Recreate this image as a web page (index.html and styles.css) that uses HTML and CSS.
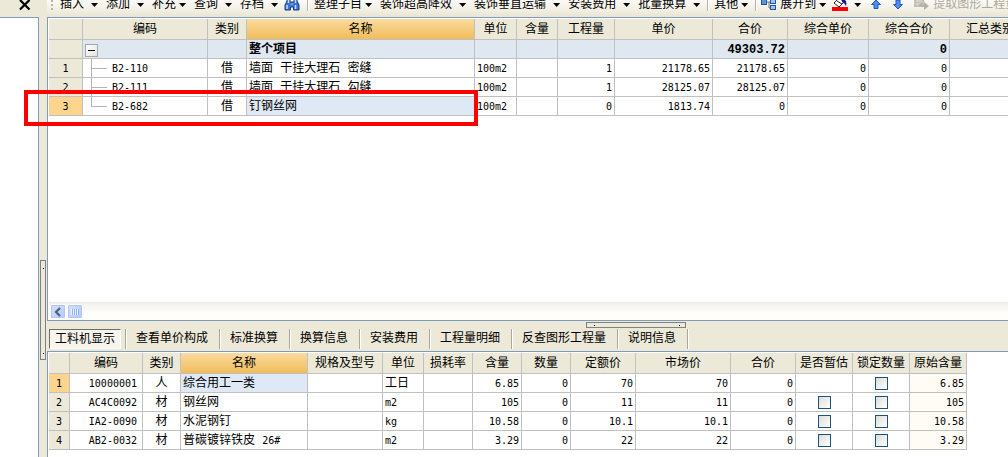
FILE: index.html
```html
<!DOCTYPE html>
<html lang="zh-CN">
<head>
<meta charset="utf-8">
<title>工程计价</title>
<link rel="stylesheet" href="styles.css">
</head>
<body>
<div class="app">
  <aside class="side">
    <div class="side-head">
      <button class="close" aria-label="关闭"><svg width="12" height="12" viewBox="0 0 12 12"><path d="M1 0 L10.500 9.500 M10.500 0 L1 9.500" stroke="#000" stroke-width="2.200"/></svg></button>
    </div>
    <div class="side-body"></div>
  </aside>
  <div class="vsplit"><span class="vhandle"></span></div>
  <main class="main">
    <nav class="toolbar">
      <span class="grip"></span>
      <button class="tool">插入<i class="arrow"></i></button>
      <button class="tool">添加<i class="arrow"></i></button>
      <button class="tool tight">补充<i class="arrow"></i></button>
      <button class="tool">查询<i class="arrow"></i></button>
      <button class="tool">存档<i class="arrow"></i></button>
      <button class="icon find" aria-label="查找"><svg width="16" height="12" viewBox="0 0 16 12"><path d="M3 0h3v3h4V0h3v2l2 4v5H9.500V8h-3v3H1V6l2-4z" fill="#3c74c8" stroke="#173c82"/><path d="M3 6v4M11.500 6v4M4.500 1v3M11.500 1v3" stroke="#c6deff" stroke-width="1.500"/><path d="M6.500 5h3" stroke="#8db9f5"/></svg></button>
      <span class="sep"></span>
      <button class="tool tight">整理子目<i class="arrow"></i></button>
      <button class="tool">装饰超高降效<i class="arrow"></i></button>
      <button class="tool">装饰垂直运输<i class="arrow"></i></button>
      <button class="tool">安装费用<i class="arrow"></i></button>
      <button class="tool">批量换算<i class="arrow"></i></button>
      <span class="sep"></span>
      <button class="tool tight">其他<i class="arrow"></i></button>
      <span class="sep"></span>
      <button class="tool tight expand"><svg width="16" height="12" viewBox="0 0 16 12"><path d="M5 3h3v6h3M8 3h3" fill="none" stroke="#777"/><rect x=".5" y=".5" width="5" height="5" fill="#5b94e6" stroke="#2454a4"/><rect x="9.500" y=".5" width="5" height="4" fill="#9cc2f6" stroke="#2454a4"/><rect x="9.500" y="6.500" width="5" height="4" fill="#9cc2f6" stroke="#2454a4"/></svg>展开到<i class="arrow"></i></button>
      <button class="icon fill" aria-label="填充颜色"><svg width="16" height="12" viewBox="0 0 16 12"><path d="M2 4 7 -1l5 4-5 5z" fill="#fff" stroke="#222"/><path d="M5 2l5 3" stroke="#222"/><path d="M10 0c4 0 5 3 4 7-1-1-1-3-4-4z" fill="#14148c"/><rect y="8" width="16" height="4" fill="#f00"/></svg><i class="arrow"></i></button>
      <button class="icon up" aria-label="上移"><svg width="10" height="10" viewBox="0 0 10 10"><path d="M5 0 9.500 4.500H7v4H3v-4H.5z" fill="#4f8cf0" stroke="#2256c0"/></svg></button>
      <button class="icon down" aria-label="下移"><svg width="10" height="10" viewBox="0 0 10 10"><path d="M5 9 9.500 4.500H7V0H3v4.500H.5z" fill="#4f8cf0" stroke="#2256c0"/></svg></button>
      <button class="tool off" disabled><svg width="16" height="12" viewBox="0 0 16 12"><rect x="1" width="10" height="8" fill="#c4c2b8"/><path d="M3 2h6M3 5h4" stroke="#e8e6dc"/><path d="M6 5c0 3 2 3 5 3v3l5-4-5-4v3c-2 0-2 0-2-1z" fill="#b3b1a6"/></svg>提取图形工程量</button>
    </nav>

    <section class="pane top">
      <table class="grid">
        <colgroup><col class="w34"><col class="w125"><col class="w39"><col class="w228"><col class="w42"><col class="w41"><col class="w57"><col class="w98"><col class="w75"><col class="w81"><col class="w81"><col class="w81"></colgroup>
        <thead><tr><th></th><th>编码</th><th>类别</th><th class="hot">名称</th><th>单位</th><th>含量</th><th>工程量</th><th>单价</th><th>合价</th><th>综合单价</th><th>综合合价</th><th>汇总类别</th></tr></thead>
        <tbody>
          <tr class="sum"><th></th><td><button class="toggle" aria-label="折叠"></button></td><td></td><td>整个项目</td><td></td><td></td><td></td><td></td><td class="n">49303.72</td><td></td><td class="n">0</td><td></td></tr>
          <tr><th>1</th><td class="code"><div class="node"><span class="branch"></span>B2-110</div></td><td class="c">借</td><td>墙面 干挂大理石 密缝</td><td class="u">100m2</td><td></td><td class="n">1</td><td class="n">21178.65</td><td class="n">21178.65</td><td class="n">0</td><td class="n">0</td><td></td></tr>
          <tr><th>2</th><td class="code"><div class="node"><span class="branch"></span>B2-111</div></td><td class="c">借</td><td>墙面 干挂大理石 勾缝</td><td class="u">100m2</td><td></td><td class="n">1</td><td class="n">28125.07</td><td class="n">28125.07</td><td class="n">0</td><td class="n">0</td><td></td></tr>
          <tr><th class="cur">3</th><td class="code"><div class="node"><span class="branch last"></span>B2-682</div></td><td class="c">借</td><td class="sel">钉钢丝网</td><td class="u">100m2</td><td></td><td class="n">0</td><td class="n">1813.74</td><td class="n">0</td><td class="n">0</td><td class="n">0</td><td></td></tr>
        </tbody>
      </table>
      <div class="scroll">
        <button class="sbtn" aria-label="向左滚动"><svg width="8" height="10" viewBox="0 0 8 10"><path d="M6 1 2 5l4 4" fill="none" stroke="#4d6185" stroke-width="2.200"/></svg></button>
        <button class="sbtn thumb" aria-label="滚动块"><svg width="8" height="8" viewBox="0 0 8 8"><path d="M.5 1v6M2.500 1v6M4.500 1v6M6.500 1v6" stroke="#eef4fe"/><path d="M1.500 1v6M3.500 1v6M5.500 1v6M7.500 1v6" stroke="#8cb0f8"/></svg></button>
      </div>
    </section>

    <div class="tabs">
      <span class="hhandle"></span>
      <button class="tab on">工料机显示</button>
      <span class="tabsep"></span>
      <button class="tab">查看单价构成</button>
      <span class="tabsep"></span>
      <button class="tab">标准换算</button>
      <span class="tabsep"></span>
      <button class="tab">换算信息</button>
      <span class="tabsep"></span>
      <button class="tab">安装费用</button>
      <span class="tabsep"></span>
      <button class="tab">工程量明细</button>
      <span class="tabsep"></span>
      <button class="tab">反查图形工程量</button>
      <span class="tabsep"></span>
      <button class="tab">说明信息</button>
      <span class="tabsep"></span>
    </div>

    <section class="pane bottom">
      <table class="grid">
        <colgroup><col class="w21"><col class="w73"><col class="w38"><col class="w127"><col class="w75"><col class="w41"><col class="w49"><col class="w49"><col class="w49"><col class="w65"><col class="w95"><col class="w65"><col class="w57"><col class="w57"><col class="w57"></colgroup>
        <thead><tr><th></th><th>编码</th><th>类别</th><th class="hot">名称</th><th>规格及型号</th><th>单位</th><th>损耗率</th><th>含量</th><th>数量</th><th>定额价</th><th>市场价</th><th>合价</th><th>是否暂估</th><th>锁定数量</th><th>原始含量</th></tr></thead>
        <tbody>
          <tr><th class="cur">1</th><td class="n id">10000001</td><td class="c">人</td><td class="sel">综合用工一类</td><td></td><td>工日</td><td></td><td class="n">6.85</td><td class="n">0</td><td class="n">70</td><td class="n">70</td><td class="n">0</td><td></td><td class="check"><input type="checkbox" aria-label="锁定数量 1"></td><td class="n raw">6.85</td></tr>
          <tr><th>2</th><td class="n id">AC4C0092</td><td class="c">材</td><td>钢丝网</td><td></td><td class="u">m2</td><td></td><td class="n">105</td><td class="n">0</td><td class="n">11</td><td class="n">11</td><td class="n">0</td><td class="check"><input type="checkbox" aria-label="是否暂估 2"></td><td class="check"><input type="checkbox" aria-label="锁定数量 2"></td><td class="n raw">105</td></tr>
          <tr><th>3</th><td class="n id">IA2-0090</td><td class="c">材</td><td>水泥钢钉</td><td></td><td class="u">kg</td><td></td><td class="n">10.58</td><td class="n">0</td><td class="n">10.1</td><td class="n">10.1</td><td class="n">0</td><td class="check"><input type="checkbox" aria-label="是否暂估 3"></td><td class="check"><input type="checkbox" aria-label="锁定数量 3"></td><td class="n raw">10.58</td></tr>
          <tr><th>4</th><td class="n id">AB2-0032</td><td class="c">材</td><td>普碳镀锌铁皮 <span class="latin">26#</span></td><td></td><td class="u">m2</td><td></td><td class="n">3.29</td><td class="n">0</td><td class="n">22</td><td class="n">22</td><td class="n">0</td><td class="check"><input type="checkbox" aria-label="是否暂估 4"></td><td class="check"><input type="checkbox" aria-label="锁定数量 4"></td><td class="n raw">3.29</td></tr>
        </tbody>
      </table>
    </section>
  </main>
  <div class="mark"></div>
</div>
</body>
</html>
```
FILE: styles.css
```css
* { box-sizing: border-box; }
body {
  margin: 0;
  background: #ece9d8;
  color: #000;
  font: 12px/18px "Liberation Mono", "Noto Sans CJK SC", monospace;
}
button { margin: 0; padding: 0; border: 0; background: none; color: inherit; font: inherit; }
svg { display: block; flex: none; }

.app {
  position: relative;
  display: grid;
  grid-template-columns: 39px 8px minmax(0, 1fr);
  height: 100vh;
  overflow: hidden;
}

/* left panel */
.side { display: flex; flex-direction: column; }
.side-head { height: 17px; padding-left: 19px; }
.close { display: block; }
.side-body { flex: 1; background: #fff; border: solid #7f9db9; border-width: 1px 1px 0 0; }
.vsplit { display: flex; flex-direction: column; padding: 260px 1px 0; }
.vhandle {
  height: 100px;
  border: 1px solid #808080;
  background:
    linear-gradient(#003, #003) 2px 7px / 1px 1px no-repeat,
    linear-gradient(#003, #003) 2px 92px / 1px 1px no-repeat;
}

.main { display: flex; flex-direction: column; min-width: 0; min-height: 0; }

/* toolbar */
.toolbar {
  display: flex;
  align-items: flex-start;
  height: 17px;
  padding-left: 4px;
  background: linear-gradient(#fbfaf6, #f3f1e6 50%, #e9e5d3);
  overflow: hidden;
}
.tool, .icon { display: flex; flex: none; align-items: center; height: 10px; line-height: 10px; white-space: nowrap; }
.tool { gap: 7px; margin-right: 8px; }
.tight { gap: 3px; }
.grip { flex: none; width: 2px; height: 11px; margin-right: 7px; background: repeating-linear-gradient(#b8b4a2 0 2px, transparent 2px 4px); }
.arrow { width: 7px; height: 4px; background: #000; clip-path: polygon(0 0, 100% 0, 50% 100%); }
.sep { flex: none; width: 2px; height: 11px; margin-right: 5px; border-left: 1px solid #b5b29f; border-right: 1px solid #fff; }
.find { margin: 0 7px 0 -2px; width: 16px; }
.tool + .sep { margin-left: -1px; }
.expand { margin: 0 6px 0 -1px; }
.fill { gap: 6px; margin-right: 10px; }
.up { margin-right: 12px; }
.down { margin-right: 10px; }
.off { gap: 4px; color: #aca899; }

/* data panes */
.pane { background: #fff; border: 1px solid #7f9db9; border-right: 0; padding: 1px 0 0 1px; overflow: hidden; }
.top { display: flex; flex: 1; flex-direction: column; justify-content: space-between; min-height: 0; }
.bottom { flex: none; border-bottom: 0; padding-bottom: 7px; }

.grid { width: 0; table-layout: fixed; border-spacing: 0; }
.w21 { width: 21px; } .w34 { width: 34px; } .w38 { width: 38px; } .w39 { width: 39px; }
.w41 { width: 41px; } .w42 { width: 42px; } .w49 { width: 49px; } .w57 { width: 57px; }
.w65 { width: 65px; } .w73 { width: 73px; } .w75 { width: 75px; } .w81 { width: 81px; }
.w95 { width: 95px; } .w98 { width: 98px; } .w125 { width: 125px; } .w127 { width: 127px; } .w228 { width: 228px; }
.grid th, .grid td {
  height: 19px;
  padding: 2px 2px 0;
  line-height: 16px;
  border: solid #c0c0c0;
  border-width: 0 1px 1px 0;
  font-weight: normal;
  text-align: left;
  white-space: nowrap;
  overflow: hidden;
}
.grid th { background: #ece9d8; text-align: center; }
.grid thead th { height: 21px; padding: 2px 0 0; }
.grid .hot { background: linear-gradient(#fadb9f, #f0bd5b); }
.grid .cur { background: #ffd58d; }
.grid .sel { background: #dfe9f6; }
.grid .sum td { background: #dfe7f1; font-weight: bold; }
.grid .c { text-align: center; }
.grid .n { text-align: right; }
.grid tbody th, .grid .n, .grid .u, .grid .code, .latin { font-family: "DejaVu Sans Mono", monospace; font-size: 10px; }
.grid .sum .n { font-family: "Liberation Mono", monospace; font-size: 12px; }
.grid .id { padding-right: 5px; }
.grid .raw { background: #fffbf5; }
.grid .code { padding: 0; }
.grid .check { padding: 1px 0 0; }

.node { display: flex; align-items: flex-start; gap: 5px; height: 18px; padding-left: 8px; line-height: 20px; }
.branch { width: 16px; height: 18px; background: linear-gradient(#b4b4b4, #b4b4b4) 0 9px / 16px 1px no-repeat, linear-gradient(#b4b4b4, #b4b4b4) 0 0 / 1px 18px no-repeat; }
.last { background-size: 16px 1px, 1px 10px; }
.toggle {
  display: block;
  width: 13px;
  height: 13px;
  border: 1px solid #a8a8a8;
  background: linear-gradient(#000, #000) 2px 5px / 7px 1px no-repeat, linear-gradient(135deg, #fff, #e4e2dc);
}
input[type="checkbox"] {
  appearance: none;
  display: block;
  width: 13px;
  height: 13px;
  margin: 0 auto;
  border: 1px solid #1c5180;
  background: linear-gradient(135deg, #dcdcd7, #fff);
}

/* scrollbar */
.scroll { display: flex; gap: 1px; height: 18px; padding: 1px; border-top: 1px solid #eeede5; background: linear-gradient(#f3f1ec, #fefefb 60%); }
.sbtn { display: grid; place-items: center; width: 16px; height: 15px; border: 1px solid #fff; border-radius: 2px; background: linear-gradient(135deg, #d5e2fe, #b4c9fa); box-shadow: inset 0 0 0 1px #b0c6f4; }

/* tabs */
.tabs { position: relative; display: flex; flex: none; align-items: flex-end; height: 30px; padding: 0 0 2px 2px; }
.hhandle {
  position: absolute;
  top: 1px;
  left: 56.100%;
  width: 100px;
  height: 6px;
  border: 1px solid #808080;
  background:
    linear-gradient(#003, #003) 7px 2px / 1px 1px no-repeat,
    linear-gradient(#003, #003) 92px 2px / 1px 1px no-repeat;
}
.tab { flex: none; height: 20px; padding: 0 11px 0 9px; line-height: 20px; white-space: nowrap; }
.on { margin-right: 4px; padding: 0 5px; border: 1px solid; border-color: #716f64 #fff #fff #716f64; background: #f6f4ec; }
.tabsep { flex: none; width: 2px; height: 20px; border-left: 1px solid #aca899; border-right: 1px solid #fff; }

/* annotation frame */
.mark { position: absolute; left: 24px; top: 90px; width: 454px; height: 36px; border: 4px solid #f00; pointer-events: none; }
```
